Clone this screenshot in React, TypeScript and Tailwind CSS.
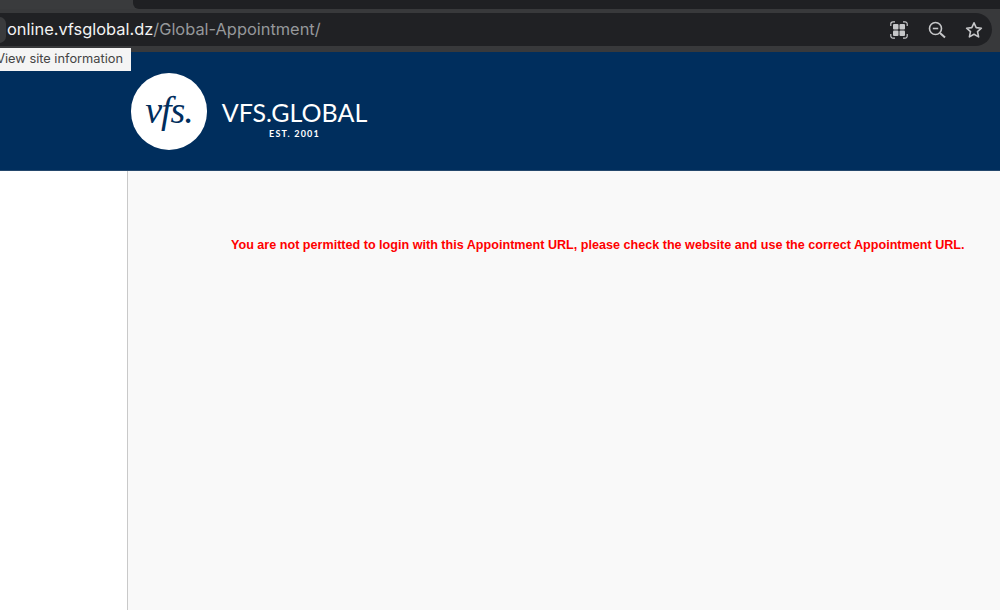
import React from "react";

export default function App() {
  return (
    <div className="relative flex h-[610px] w-[1000px] flex-col overflow-hidden bg-white font-['Liberation_Sans',sans-serif]">
      {/* Browser chrome */}
      <div className="flex h-[52px] flex-col bg-[#38393b]">
        <div className="flex h-[9px] shrink-0 bg-[#3a3b3d]">
          <div className="ml-[133px] h-full flex-1 rounded-bl-[6px] bg-[#1f2023]" />
        </div>
        <div className="mt-1 flex h-[33px] w-[992px] items-center rounded-r-[17px] bg-[#202124]">
          <div className="h-[26px] w-[13px] -translate-x-[7px] rounded-full bg-[#3a3b3d]" />
          <div className="-ml-[6px] flex-1 font-['Inter',sans-serif] text-[16.4px] leading-none">
            <span className="text-[#f3f3f3]">online.vfsglobal.dz</span>
            <span className="text-[#96989b]">/Global-Appointment/</span>
          </div>
          <div className="flex items-center text-[#c6c7c9]">
            <svg width="18" height="18" viewBox="0 0 18 18" fill="none" className="mr-[20px]">
              <path d="M.8 5V3A2.2 2.2 0 0 1 3 .8h2M13 .8h2A2.2 2.2 0 0 1 17.2 3v2M17.2 13v2a2.2 2.2 0 0 1-2.2 2.2h-2M5 17.2H3A2.2 2.2 0 0 1 .8 15v-2" stroke="currentColor" strokeWidth="1.2" />
              <rect x="3" y="3" width="5.5" height="5.5" rx="1" fill="currentColor" />
              <rect x="9.5" y="3" width="5.5" height="5.5" rx="1" fill="currentColor" />
              <rect x="3" y="9.5" width="5.5" height="5.5" rx="1" fill="currentColor" />
              <rect x="9.5" y="9.5" width="5.5" height="5.5" rx="1" fill="currentColor" />
            </svg>
            <svg width="18" height="18" viewBox="0 0 18 18" fill="none" stroke="currentColor" className="mr-[19px]">
              <circle cx="7.5" cy="7.5" r="6" strokeWidth="1.6" />
              <path d="M4.8 7.5h5.4" strokeWidth="1.6" />
              <path d="M12 12l5 4.5" strokeWidth="2" />
            </svg>
            <svg width="18" height="18" viewBox="0 0 18 18" fill="none" className="mr-[9px]">
              <path d="M9 1.8l2.2 4.8 5.2.6-3.9 3.5 1.1 5.2L9 13.3l-4.6 2.6 1.1-5.2L1.6 7.2l5.2-.6z" stroke="currentColor" strokeWidth="1.6" strokeLinejoin="round" />
            </svg>
          </div>
        </div>
      </div>

      {/* Tooltip */}
      <div className="absolute left-0 top-[48px] flex h-[23px] w-[131px] items-center justify-end overflow-hidden whitespace-nowrap bg-[#f4f4f4] pr-[8px] font-['Inter',sans-serif] text-[12.8px] leading-none text-[#444444]">
        View site information
      </div>

      {/* Site header */}
      <div className="flex h-[119px] shrink-0 items-center border-b border-[#24476c] bg-[#002e5d] pl-[131px] pt-[1px]">
        <div className="flex h-[77px] w-[76px] shrink-0 items-center justify-center rounded-full bg-white pb-1 font-['Liberation_Serif',serif] text-[38px] italic leading-none tracking-[-1px] text-[#002e5d]">
          vfs.
        </div>
        <div className="ml-[15px] flex w-[145px] flex-col items-center pt-[15px] text-white">
          <div className="whitespace-nowrap font-['Lato',sans-serif] text-[25px] leading-none">VFS.GLOBAL</div>
          <div className="mt-[4px] font-['Lato',sans-serif] text-[9px] font-bold leading-none tracking-[1.2px]">EST. 2001</div>
        </div>
      </div>

      {/* Body */}
      <div className="flex flex-1">
        <div className="w-[127px] shrink-0 bg-white" />
        <div className="flex-1 border-l border-[#c9c9c9] bg-[#f9f9f9] pl-[103px] pt-[67px]">
          <p className="whitespace-nowrap text-[12.6px] font-bold leading-[15px] text-[#ff0000]">
            You are not permitted to login with this Appointment URL, please check the website and use the correct Appointment URL.
          </p>
        </div>
      </div>
    </div>
  );
}
